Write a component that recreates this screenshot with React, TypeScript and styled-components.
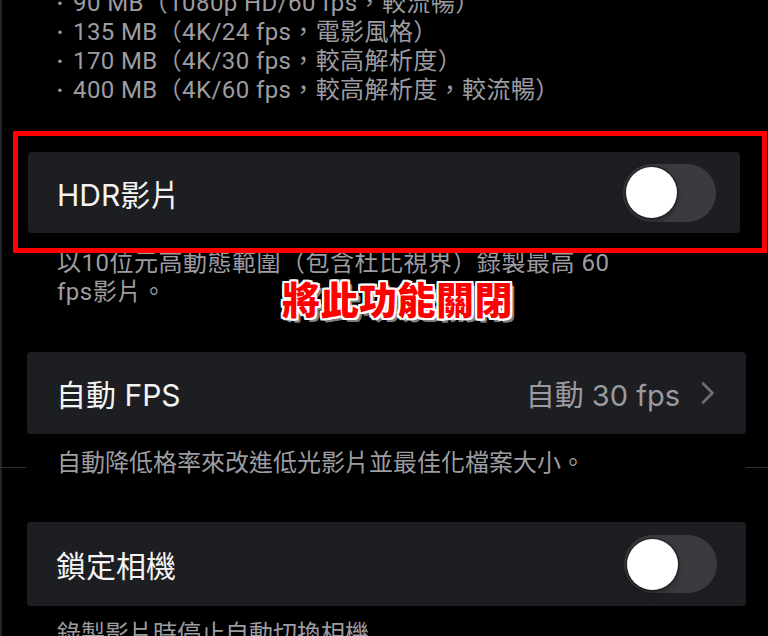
import React from "react";
import styled, { createGlobalStyle } from "styled-components";

const GlobalStyle = createGlobalStyle`
  html, body {
    margin: 0;
    padding: 0;
    background: #000;
  }
  body {
    font-family: Roboto, "Noto Sans CJK TC", sans-serif;
  }
`;

const sizes = [
  "90 MB（1080p HD/60 fps，較流暢）",
  "135 MB（4K/24 fps，電影風格）",
  "170 MB（4K/30 fps，較高解析度）",
  "400 MB（4K/60 fps，較高解析度，較流暢）",
];

const App = () => {
  return (
    <Page>
      <GlobalStyle />
      <SizeList>
        {sizes.map((s) => (
          <SizeItem key={s}>
            <Bullet>•</Bullet>
            {s}
          </SizeItem>
        ))}
      </SizeList>

      <Card $top={47} $left={28} $right={28} $height={81} $padRight={24}>
        <Highlight />
        <Title>HDR影片</Title>
        <Switch>
          <Knob />
        </Switch>
      </Card>
      <Footer $top={16} $spacing={0.5}>
        以10位元高動態範圍（包含杜比視界）錄製最高 60
        <br />
        fps影片。
      </Footer>

      <Card $top={45} $left={27} $right={22} $height={82} $padRight={31}>
        <Title>自動 FPS</Title>
        <Value>
          自動 30 fps
          <Chevron width="14" height="24" viewBox="0 0 14 24">
            <path
              d="M2 2.5 L11.5 12 L2 21.5"
              fill="none"
              stroke="#6e6e73"
              strokeWidth="2.6"
              strokeLinecap="round"
              strokeLinejoin="round"
            />
          </Chevron>
        </Value>
      </Card>
      <Footer $top={15} $rule>
        自動降低格率來改進低光影片並最佳化檔案大小。
      </Footer>

      <Card $top={44} $left={27} $right={22} $height={84} $padRight={29}>
        <Title>鎖定相機</Title>
        <Switch>
          <Knob />
        </Switch>
      </Card>
      <Footer $top={14}>錄製影片時停止自動切換相機</Footer>

      <Annotation>將此功能關閉</Annotation>
    </Page>
  );
};

const Page = styled.div`
  position: relative;
  width: 768px;
  height: 636px;
  overflow: hidden;
  background: #000;
  box-shadow: inset 2px 0 0 #242424;
`;

const SizeList = styled.div`
  margin-top: -11px;
  padding-left: 57px;
  font-size: 24px;
  line-height: 29px;
  letter-spacing: 0.4px;
  color: #9c9ca1;
`;

const SizeItem = styled.div`
  display: flex;
  align-items: center;
  white-space: nowrap;
`;

const Bullet = styled.span`
  width: 16px;
  font-size: 17px;
  flex-shrink: 0;
`;

const Card = styled.div<{
  $top: number;
  $left: number;
  $right: number;
  $height: number;
  $padRight: number;
}>`
  position: relative;
  display: flex;
  align-items: center;
  justify-content: space-between;
  height: ${(p) => p.$height}px;
  margin: ${(p) => p.$top}px ${(p) => p.$right}px 0 ${(p) => p.$left}px;
  padding: 0 ${(p) => p.$padRight}px 0 29px;
  background: #1c1e21;
  border-radius: 4px;
`;

const Highlight = styled.div`
  position: absolute;
  top: -21px;
  left: -15px;
  right: -27px;
  bottom: -20px;
  border: 5px solid #ff0000;
  pointer-events: none;
`;

const Title = styled.span`
  font-family: Inter, "Noto Sans CJK TC", sans-serif;
  font-size: 30px;
  color: #f4f4f4;
`;

const Value = styled.span`
  display: flex;
  align-items: center;
  font-family: Inter, "Noto Sans CJK TC", sans-serif;
  font-size: 29px;
  color: #9a9aa0;
`;

const Chevron = styled.svg`
  margin-left: 21px;
`;

const Switch = styled.span`
  display: flex;
  align-items: center;
  width: 93px;
  height: 58px;
  padding: 0 3px;
  box-sizing: border-box;
  border-radius: 29px;
  background: #3a3b3f;
  flex-shrink: 0;
`;

const Knob = styled.span`
  width: 51px;
  height: 51px;
  border-radius: 50%;
  background: #fff;
  box-shadow: 0 0 0 1.5px rgba(0, 0, 0, 0.3), 0 3px 7px rgba(0, 0, 0, 0.35);
`;

const Footer = styled.div<{ $top: number; $rule?: boolean; $spacing?: number }>`
  margin-top: ${(p) => p.$top}px;
  padding-left: 57px;
  font-size: 24px;
  line-height: 29px;
  letter-spacing: ${(p) => p.$spacing ?? 0}px;
  color: #9c9ca1;
  white-space: nowrap;
  ${(p) =>
    p.$rule &&
    `background: linear-gradient(to right, #303030 0 26px, transparent 26px calc(100% - 22px), #303030 calc(100% - 22px)) no-repeat 0 18px / 100% 1px;`}
`;

const Annotation = styled.div`
  position: absolute;
  top: 279px;
  left: 282px;
  font-family: "Noto Sans CJK TC", sans-serif;
  font-size: 38px;
  font-weight: 900;
  line-height: 1;
  letter-spacing: 0.5px;
  color: #ff0000;
  text-shadow: 2px 0 #fff, -2px 0 #fff, 0 2px #fff, 0 -2px #fff, 2px 2px #fff,
    -2px -2px #fff, 2px -2px #fff, -2px 2px #fff, 4px 4px #7c7c7c,
    3px 4px #7c7c7c, 4px 3px #7c7c7c;
`;

export default App;
